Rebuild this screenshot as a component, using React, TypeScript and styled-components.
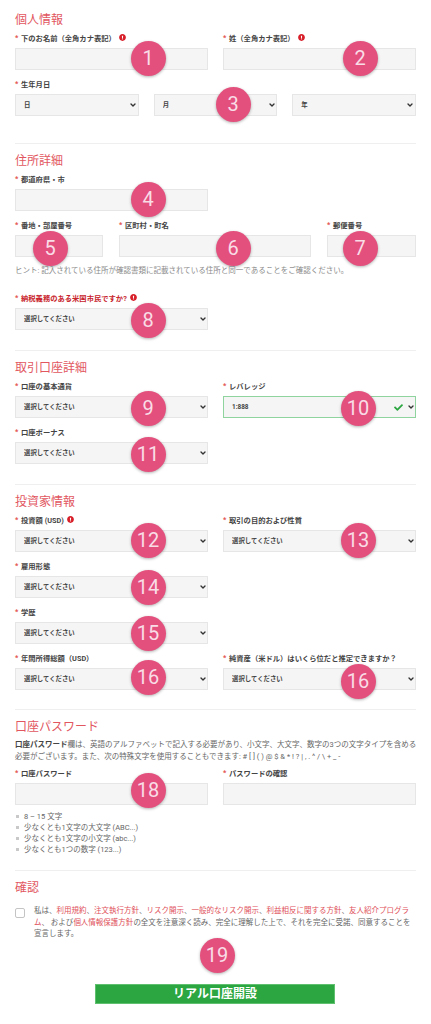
import React from 'react'
import styled, { createGlobalStyle } from 'styled-components'
import { FaCheck, FaExclamationCircle } from 'react-icons/fa'
import { ChevronDown } from 'lucide-react'

const GlobalStyle = createGlobalStyle`
  html, body {
    margin: 0;
    padding: 0;
    background: #fff;
    font-family: Roboto, "Noto Sans CJK JP", sans-serif;
    color: #444;
  }
`

const Page = styled.div`
  position: relative;
  width: 431px;
  height: 1024px;
  box-sizing: border-box;
  padding: 3px 15px 0;
  overflow: hidden;
`

const Section = styled.section<{ $pad?: number; $noLine?: boolean }>`
  padding: 10px 0 ${(p) => p.$pad ?? 12}px;
  border-bottom: ${(p) => (p.$noLine ? 'none' : '1px solid #efefef')};
`

const Heading = styled.h2`
  margin: 0 0 5px;
  font-size: 12px;
  line-height: 14px;
  font-weight: 400;
  color: #e2575f;
`

const TwoCols = styled.div`
  display: grid;
  grid-template-columns: 1fr 1fr;
  column-gap: 15px;
`

const ThreeCols = styled.div`
  display: grid;
  grid-template-columns: repeat(3, 1fr);
  column-gap: 15px;
`

const AddressRow = styled.div`
  display: grid;
  grid-template-columns: 88px 192px 89px;
  column-gap: 16px;
`

const Field = styled.div`
  margin-bottom: 8px;
  min-width: 0;
`

const Label = styled.label<{ $alert?: boolean }>`
  display: flex;
  align-items: center;
  height: 11px;
  margin-bottom: 5px;
  font-size: 7.3px;
  font-weight: 700;
  white-space: nowrap;
  color: ${(p) => (p.$alert ? '#c8232c' : '#444')};
`

const Star = styled.span`
  width: 6px;
  flex: none;
  color: #e2504f;
`

const InfoIcon = styled(FaExclamationCircle)`
  width: 7px;
  height: 7px;
  margin-left: 3px;
  color: #d8202a;
`

const TextInput = styled.input`
  display: block;
  width: 100%;
  height: 22px;
  box-sizing: border-box;
  background: #f5f5f5;
  border: 1px solid #e6e6e6;
  border-radius: 0;
  outline: none;
`

const SelectBox = styled.div`
  position: relative;
`

const NativeSelect = styled.select<{ $valid?: boolean }>`
  display: block;
  width: 100%;
  height: 22px;
  box-sizing: border-box;
  padding: 0 0 0 8px;
  appearance: none;
  background: #f5f5f5;
  border: 1px solid ${(p) => (p.$valid ? '#8fd39f' : '#e6e6e6')};
  border-radius: 0;
  outline: none;
  font-family: inherit;
  font-size: 6.4px;
  font-weight: 700;
  color: #444;
`

const Chevron = styled(ChevronDown)`
  position: absolute;
  top: 7px;
  right: 1.5px;
  width: 8px;
  height: 8px;
  color: #333;
  stroke-width: 4;
  pointer-events: none;
`

const ValidMark = styled(FaCheck)`
  position: absolute;
  top: 6.5px;
  right: 12px;
  width: 11px;
  height: 9px;
  color: #2ba640;
`

const Hint = styled.p`
  margin: 0 0 16px;
  font-size: 7.5px;
  line-height: 11px;
  white-space: nowrap;
  color: #8a8a8a;
`

const Intro = styled.p`
  margin: 0 0 5px;
  font-size: 7.5px;
  line-height: 11.5px;
  white-space: nowrap;
  color: #666;

  b {
    color: #444;
  }
`

const Rules = styled.ul`
  list-style: none;
  margin: -2px 0 0;
  padding: 0;
`

const Rule = styled.li`
  position: relative;
  padding-left: 9px;
  font-size: 7.5px;
  line-height: 11px;
  color: #666;

  &::before {
    content: '';
    position: absolute;
    left: 1px;
    top: 4px;
    width: 2.5px;
    height: 2.5px;
    background: #c9c9c9;
  }
`

const Consent = styled.div`
  display: flex;
  margin-top: 10px;
`

const Tick = styled.span`
  flex: none;
  width: 10px;
  height: 10px;
  margin: 3px 9px 0 0;
  box-sizing: border-box;
  border: 1px solid #c4c4c4;
  border-radius: 2px;
`

const ConsentText = styled.p`
  margin: 0;
  width: 378px;
  font-size: 7.5px;
  line-height: 11.5px;
  color: #666;

  a {
    color: #e0505a;
    text-decoration: none;
  }
`

const Submit = styled.button`
  display: block;
  width: 240px;
  height: 20px;
  margin: 44px 0 0 80px;
  padding: 0;
  background: #2ba640;
  border: 1px solid #5fc06f;
  border-radius: 0;
  font-family: inherit;
  font-size: 12px;
  font-weight: 700;
  line-height: 18px;
  color: #fff;
`

const Badge = styled.span.attrs<{ $x: number; $y: number }>((p) => ({
  style: { left: p.$x - 17.5, top: p.$y - 17.5 },
}))<{ $x: number; $y: number }>`
  position: absolute;
  width: 35px;
  height: 35px;
  display: flex;
  align-items: center;
  justify-content: center;
  border-radius: 50%;
  background: #e4507e;
  box-shadow: 0 1px 3px rgba(0, 0, 0, 0.3);
  font-size: 20px;
  color: #f9dde6;
`

const badges: [string, number, number][] = [
  ['1', 148, 58],
  ['2', 360, 58],
  ['3', 233, 104],
  ['4', 148, 199],
  ['5', 50, 248],
  ['6', 233, 248],
  ['7', 360, 248],
  ['8', 148, 320],
  ['9', 148, 408],
  ['10', 358, 408],
  ['11', 148, 454],
  ['12', 148, 540],
  ['13', 358, 540],
  ['14', 148, 587],
  ['15', 148, 633],
  ['16', 148, 677],
  ['16', 358, 681],
  ['18', 148, 790],
  ['19', 217, 955],
]

const PLACEHOLDER = '選択してください'

const FieldLabel: React.FC<{ text: string; info?: boolean; alert?: boolean }> = ({ text, info, alert }) => (
  <Label $alert={alert}>
    <Star>*</Star>
    {text}
    {info && <InfoIcon />}
  </Label>
)

const InputField: React.FC<{ label: string; info?: boolean }> = ({ label, info }) => (
  <Field>
    <FieldLabel text={label} info={info} />
    <TextInput type="text" />
  </Field>
)

const Select: React.FC<{ value?: string; valid?: boolean }> = ({ value = PLACEHOLDER, valid }) => (
  <SelectBox>
    <NativeSelect $valid={valid} defaultValue={value}>
      <option>{value}</option>
    </NativeSelect>
    {valid && <ValidMark />}
    <Chevron />
  </SelectBox>
)

const SelectField: React.FC<{ label: string; info?: boolean; alert?: boolean; value?: string; valid?: boolean }> = ({
  label,
  info,
  alert,
  value,
  valid,
}) => (
  <Field>
    <FieldLabel text={label} info={info} alert={alert} />
    <Select value={value} valid={valid} />
  </Field>
)

const App: React.FC = () => (
  <Page>
    <GlobalStyle />

    <Section $pad={27}>
      <Heading>個人情報</Heading>
      <TwoCols>
        <InputField label="下のお名前（全角カナ表記）" info />
        <InputField label="姓（全角カナ表記）" info />
      </TwoCols>
      <FieldLabel text="生年月日" />
      <ThreeCols>
        <Select value="日" />
        <Select value="月" />
        <Select value="年" />
      </ThreeCols>
    </Section>

    <Section>
      <Heading>住所詳細</Heading>
      <TwoCols>
        <InputField label="都道府県・市" />
      </TwoCols>
      <AddressRow>
        <InputField label="番地・部屋番号" />
        <InputField label="区町村・町名" />
        <InputField label="郵便番号" />
      </AddressRow>
      <Hint>ヒント: 記入されている住所が確認書類に記載されている住所と同一であることをご確認ください。</Hint>
      <TwoCols>
        <SelectField label="納税義務のある米国市民ですか?" info alert />
      </TwoCols>
    </Section>

    <Section>
      <Heading>取引口座詳細</Heading>
      <TwoCols>
        <SelectField label="口座の基本通貨" />
        <SelectField label="レバレッジ" value="1:888" valid />
        <SelectField label="口座ボーナス" />
      </TwoCols>
    </Section>

    <Section $pad={11}>
      <Heading>投資家情報</Heading>
      <TwoCols>
        <SelectField label="投資額 (USD)" info />
        <SelectField label="取引の目的および性質" />
      </TwoCols>
      <TwoCols>
        <SelectField label="雇用形態" />
      </TwoCols>
      <TwoCols>
        <SelectField label="学歴" />
      </TwoCols>
      <TwoCols>
        <SelectField label="年間所得総額（USD）" />
        <SelectField label="純資産（米ドル）はいくら位だと推定できますか？" />
      </TwoCols>
    </Section>

    <Section $pad={15}>
      <Heading>口座パスワード</Heading>
      <Intro>
        <b>口座パスワード</b>欄は、英語のアルファベットで記入する必要があり、小文字、大文字、数字の3つの文字タイプを含める
        <br />
        必要がございます。また、次の特殊文字を使用することもできます: # [ ] ( ) @ $ &amp; * ! ? | , . ^ / \ + _ -
      </Intro>
      <TwoCols>
        <InputField label="口座パスワード" />
        <InputField label="パスワードの確認" />
      </TwoCols>
      <Rules>
        <Rule>8 – 15 文字</Rule>
        <Rule>少なくとも1文字の大文字 (ABC...)</Rule>
        <Rule>少なくとも1文字の小文字 (abc...)</Rule>
        <Rule>少なくとも1つの数字 (123...)</Rule>
      </Rules>
    </Section>

    <Section $noLine>
      <Heading>確認</Heading>
      <Consent>
        <Tick />
        <ConsentText>
          私は、<a href="#t">利用規約</a>、<a href="#o">注文執行方針</a>、<a href="#r">リスク開示</a>、
          <a href="#g">一般的なリスク開示</a>、<a href="#c">利益相反に関する方針</a>、<a href="#f">友人紹介プログラム</a>
          、 および<a href="#p">個人情報保護方針</a>の全文を注意深く読み、完全に理解した上で、それを完全に受諾、同意することを宣言します。
        </ConsentText>
      </Consent>
      <Submit type="button">リアル口座開設</Submit>
    </Section>

    {badges.map(([n, x, y], i) => (
      <Badge key={i} $x={x} $y={y}>
        {n}
      </Badge>
    ))}
  </Page>
)

export default App
